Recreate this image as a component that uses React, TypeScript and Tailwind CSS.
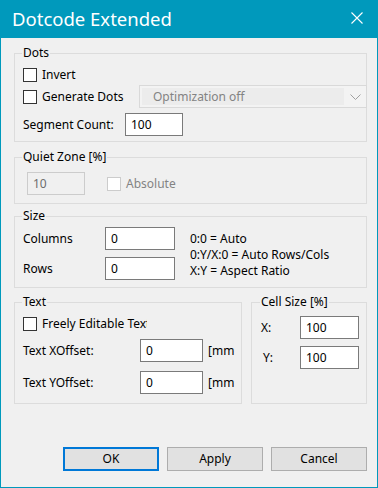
import type { ReactNode } from "react";

function CheckBox({ disabled = false }: { disabled?: boolean }) {
  return (
    <span
      className={
        disabled
          ? "w-[14px] h-[14px] shrink-0 border border-[#cccccc] bg-white"
          : "w-[14px] h-[14px] shrink-0 border border-[#333333] bg-white"
      }
    />
  );
}

function Field({ value, width, disabled = false }: { value: string; width: string; disabled?: boolean }) {
  return (
    <div
      className={
        disabled
          ? `${width} h-[23px] shrink-0 flex items-center pl-[5px] border border-[#cccccc] bg-[#f0f0f0] text-[#6d6d6d]`
          : `${width} h-[23px] shrink-0 flex items-center pl-[5px] border border-[#7a7a7a] bg-white text-black`
      }
    >
      {value}
    </div>
  );
}

function Group({ title, className, children }: { title: string; className: string; children: ReactNode }) {
  return (
    <fieldset className={`border border-[#dcdcdc] min-w-0 ${className}`}>
      <legend className="-ml-[1px] px-[1px] leading-[16px]">{title}</legend>
      {children}
    </fieldset>
  );
}

function Btn({ label, primary = false }: { label: string; primary?: boolean }) {
  return (
    <button
      className={
        primary
          ? "w-[96px] h-[24px] bg-[#e1e1e1] border-2 border-[#0078d7] text-black"
          : "w-[96px] h-[24px] bg-[#e1e1e1] border border-[#adadad] text-black"
      }
    >
      {label}
    </button>
  );
}

export default function App() {
  return (
    <div className="w-[378px] h-[488px] bg-[#0099bc] flex flex-col font-['Noto_Sans',sans-serif] text-[12px] leading-[16px] text-black">
      {/* title bar */}
      <div className="h-[38px] shrink-0 flex items-center justify-between pl-[12px] pr-[15px]">
        <span className="text-white text-[18.5px] leading-[24px] -mt-[1px]">Dotcode Extended</span>
        <svg width="12" height="12" viewBox="0 0 12 12" className="-mt-[2px]">
          <path d="M0.5 0.5 L11.5 11.5 M11.5 0.5 L0.5 11.5" stroke="white" strokeWidth="1.1" />
        </svg>
      </div>

      {/* body */}
      <div className="flex-1 mx-[1px] mb-[1px] bg-[#f0f0f0] flex flex-col pl-[13px] pr-[10px]">
        <Group title="Dots" className="mt-[7px] pl-[8px] pb-[5px]">
          <div className="mt-[7px] h-[14px] flex items-center">
            <CheckBox />
            <span className="ml-[5px]">Invert</span>
          </div>
          <div className="mt-[3px] h-[23px] flex items-center">
            <div className="w-[116px] shrink-0 flex items-center">
              <CheckBox />
              <span className="ml-[5px]">Generate Dots</span>
            </div>
            <div className="flex-1 -mr-[1px] h-[23px] border border-[#d9d9d9] bg-[#f3f3f3] flex items-stretch">
              <div className="flex-1 m-[2px] mr-0 bg-[#ececec] flex items-center pl-[11px] text-[#838383]">
                Optimization off
              </div>
              <div className="w-[22px] flex items-center justify-center">
                <svg width="11" height="6" viewBox="0 0 11 6">
                  <path d="M0.5 0.5 L5.5 5.5 L10.5 0.5" stroke="#a0a0a0" strokeWidth="1" fill="none" />
                </svg>
              </div>
            </div>
          </div>
          <div className="mt-[5px] h-[23px] flex items-center">
            <span className="w-[102px] shrink-0">Segment Count:</span>
            <Field value="100" width="w-[58px]" />
          </div>
        </Group>

        <Group title="Quiet Zone [%]" className="mt-[7px] pl-[8px] pb-[8px]">
          <div className="mt-[7px] h-[23px] flex items-center">
            <div className="ml-[4px]">
              <Field value="10" width="w-[58px]" disabled />
            </div>
            <div className="ml-[22px] flex items-center">
              <CheckBox disabled />
              <span className="ml-[5px] text-[#838383]">Absolute</span>
            </div>
          </div>
        </Group>

        <Group title="Size" className="mt-[4px] pl-[8px] pb-[7px]">
          <div className="mt-[3px] flex">
            <div className="flex flex-col gap-[7px]">
              <div className="h-[23px] flex items-center">
                <span className="w-[82px] shrink-0">Columns</span>
                <Field value="0" width="w-[70px]" />
              </div>
              <div className="h-[23px] flex items-center">
                <span className="w-[82px] shrink-0">Rows</span>
                <Field value="0" width="w-[70px]" />
              </div>
            </div>
            <div className="ml-[15px] mt-[4px] flex flex-col">
              <span>0:0 = Auto</span>
              <span>0:Y/X:0 = Auto Rows/Cols</span>
              <span>X:Y = Aspect Ratio</span>
            </div>
          </div>
        </Group>

        <div className="mt-[6px] flex gap-[9px]">
          <Group title="Text" className="w-[228px] shrink-0 pl-[8px] pb-[9px]">
            <div className="mt-[7px] h-[14px] flex items-center">
              <CheckBox />
              <span className="ml-[5px] w-[105px] overflow-hidden whitespace-nowrap">Freely Editable Text</span>
            </div>
            <div className="mt-[8px] h-[23px] flex items-center">
              <span className="w-[117px] shrink-0">Text XOffset:</span>
              <Field value="0" width="w-[63px]" />
              <span className="ml-[5px] whitespace-nowrap">[mm</span>
            </div>
            <div className="mt-[9px] h-[23px] flex items-center">
              <span className="w-[117px] shrink-0">Text YOffset:</span>
              <Field value="0" width="w-[63px]" />
              <span className="ml-[5px] whitespace-nowrap">[mm</span>
            </div>
          </Group>

          <Group title="Cell Size [%]" className="flex-1 pl-[9px]">
            <div className="mt-[6px] h-[23px] flex items-center">
              <span className="w-[39px] shrink-0">X:</span>
              <Field value="100" width="w-[59px]" />
            </div>
            <div className="mt-[7px] h-[23px] flex items-center">
              <span className="w-[39px] shrink-0 pl-[2px]">Y:</span>
              <Field value="100" width="w-[59px]" />
            </div>
          </Group>
        </div>

        <div className="mt-[43px] flex justify-end gap-[8px]">
          <Btn label="OK" primary />
          <Btn label="Apply" />
          <Btn label="Cancel" />
        </div>
      </div>
    </div>
  );
}
